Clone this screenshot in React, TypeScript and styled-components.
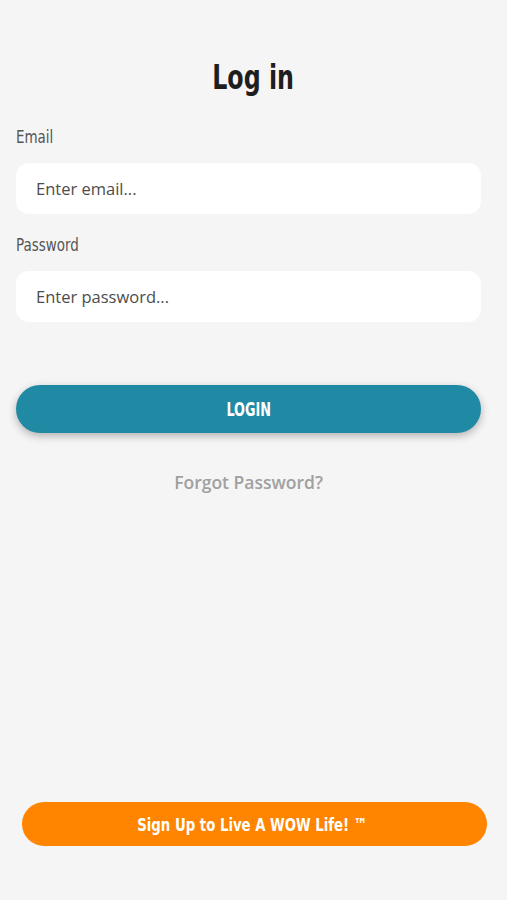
import styled, { createGlobalStyle } from 'styled-components'

const GlobalStyle = createGlobalStyle`
  html, body {
    margin: 0;
    padding: 0;
    background: #f5f5f5;
  }
  * {
    box-sizing: border-box;
  }
`

const condensed = `"DejaVu Sans Condensed", "DejaVu Sans", "Liberation Sans", sans-serif`
const body = `"Open Sans", "Noto Sans", "Liberation Sans", sans-serif`

// the original face is a tall, narrow display font; squeeze DejaVu Condensed to match
const Squeeze = styled.span<{ $sx: number; $origin?: string }>`
  display: inline-block;
  transform: scaleX(${(p) => p.$sx});
  transform-origin: ${(p) => p.$origin || 'center'};
  white-space: nowrap;
`

const Page = styled.div`
  display: flex;
  flex-direction: column;
  min-height: 900px;
  background: #f5f5f5;
`

const Title = styled.h1`
  margin: 58px 0 29px;
  text-align: center;
  font-family: ${condensed};
  font-weight: 700;
  font-size: 33px;
  line-height: 40px;
  color: #1e1e1e;
`

const Form = styled.form`
  display: flex;
  flex-direction: column;
  padding: 0 26px 0 16px;
`

const Label = styled.label`
  display: block;
  font-family: ${condensed};
  font-size: 18px;
  line-height: 20px;
  color: #555;
  margin-bottom: 16px;
`

const Input = styled.input<{ $gap: number }>`
  height: 51px;
  width: 100%;
  border: none;
  border-radius: 13px;
  background: #fff;
  padding: 0 20px;
  font-family: ${body};
  font-size: 16.5px;
  color: #333;
  outline: none;
  margin-bottom: ${(p) => p.$gap}px;

  &::placeholder {
    color: #4d4d4d;
  }
`

const PillButton = styled.button<{ $tone: string; $height: number }>`
  display: flex;
  align-items: center;
  justify-content: center;
  width: 100%;
  height: ${(p) => p.$height}px;
  border: none;
  border-radius: 999px;
  background: ${(p) => p.$tone};
  color: #fff;
  font-family: ${condensed};
  font-weight: 700;
  font-size: 18px;
  cursor: pointer;
`

const LoginButton = styled(PillButton)`
  box-shadow: 0 3px 8px rgba(0, 0, 0, 0.28);
  text-transform: uppercase;
  font-size: 19px;
`

const ForgotLink = styled.a`
  display: block;
  margin-top: 39px;
  text-align: center;
  font-family: ${body};
  font-weight: 600;
  font-size: 17.5px;
  line-height: 20px;
  color: #a0a0a0;
  text-decoration: none;
`

const Spacer = styled.div`
  flex: 1;
`

const Footer = styled.div`
  padding: 0 20px 54px 22px;
`

const SignUpButton = styled(PillButton)`
  padding-right: 10px;
`

export default function App() {
  return (
    <>
      <GlobalStyle />
      <Page>
        <Title>
          <Squeeze $sx={0.8}>Log in</Squeeze>
        </Title>
        <Form onSubmit={(e) => e.preventDefault()}>
          <Label htmlFor="email">
            <Squeeze $sx={0.83} $origin="left">Email</Squeeze>
          </Label>
          <Input id="email" type="email" placeholder="Enter email..." $gap={21} />
          <Label htmlFor="password">
            <Squeeze $sx={0.83} $origin="left">Password</Squeeze>
          </Label>
          <Input id="password" type="password" placeholder="Enter password..." $gap={63} />
          <LoginButton type="submit" $tone="#2089a3" $height={48}>
            <Squeeze $sx={0.75}>Login</Squeeze>
          </LoginButton>
          <ForgotLink href="#">Forgot Password?</ForgotLink>
        </Form>
        <Spacer />
        <Footer>
          <SignUpButton type="button" $tone="#ff8500" $height={44}>
            <Squeeze $sx={0.82}>Sign Up to Live A WOW Life! ™</Squeeze>
          </SignUpButton>
        </Footer>
      </Page>
    </>
  )
}
